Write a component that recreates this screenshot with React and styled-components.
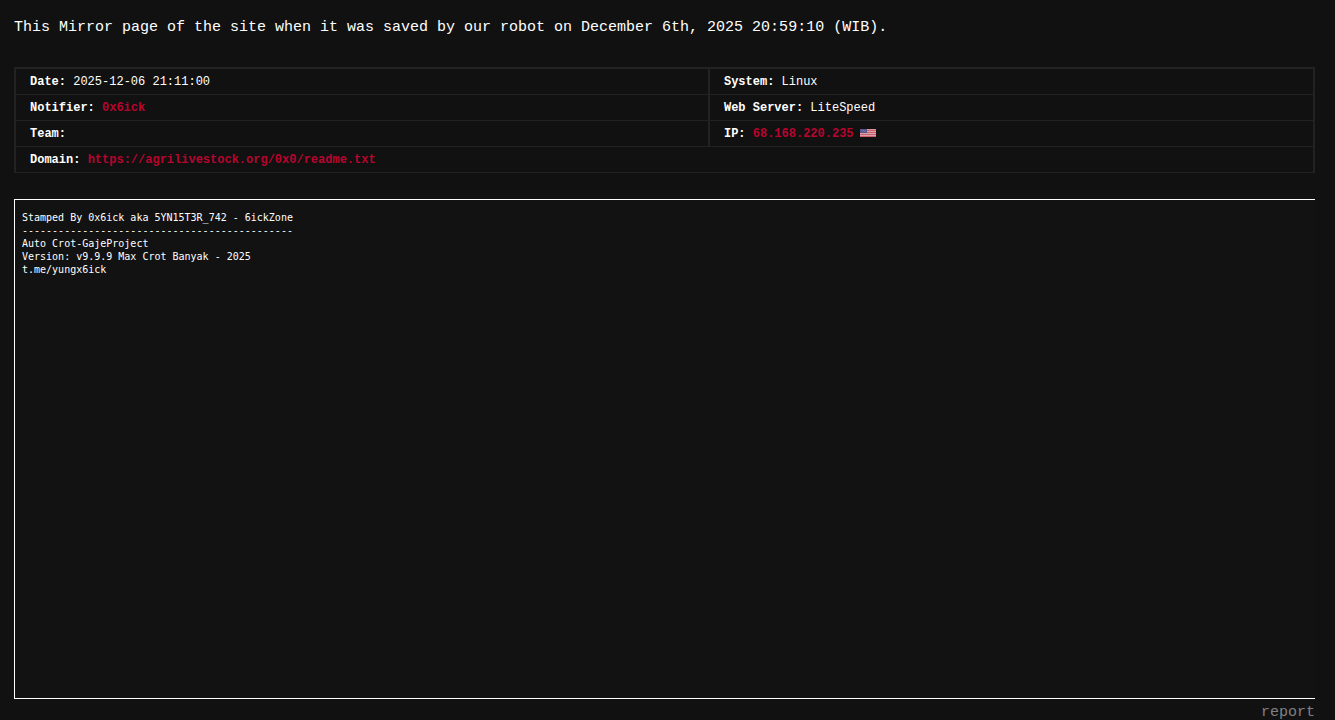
import styled, { createGlobalStyle } from "styled-components";

const GlobalStyle = createGlobalStyle`
	body {
		margin: 0;
		background-color: #111111;
		color: #ffffff;
		font-family: "Liberation Mono", "DejaVu Sans Mono", monospace;
		font-size: 15px;
	}
`

const Page = styled.main`
	padding: 18px 20px 0 14px;
`

const Intro = styled.p`
	margin: 0 0 29px;
	line-height: 20px;
`

const InfoTable = styled.table`
	width: 100%;
	border-collapse: separate;
	border-spacing: 0;
	table-layout: fixed;
	border: 2px solid #222222;
	border-bottom: none;
	font-size: 12px;
	line-height: 23px;
`

const LeftColumn = styled.col`
	width: 53.35%;
`

const InfoCell = styled.td`
	padding: 2px 14px 0;
	border-bottom: 1px solid #222222;
	border-left: ${props => props.$divided ? "2px solid #222222" : "none"};
	white-space: nowrap;
`

const InfoLink = styled.a`
	color: #b8042f;
	font-weight: bold;
	text-decoration: none;
`

const FlagIcon = styled.svg`
	width: 16px;
	height: 8px;
	margin-left: 6px;
`

const MirrorFrame = styled.section`
	box-sizing: border-box;
	height: calc(100vh - 220px);
	min-height: 100px;
	margin-top: 26px;
	padding: 11px 7px;
	background-color: #121212;
	border: 1px solid #ffffff;
	border-right: none;
`

const MirrorText = styled.pre`
	margin: 0;
	font-family: "DejaVu Sans Mono", "Liberation Mono", monospace;
	font-size: 10px;
	line-height: 13px;
`

const Footer = styled.footer`
	display: flex;
	justify-content: flex-end;
	height: 21px;
	padding-top: 5px;
	box-sizing: border-box;
	overflow: hidden;
	line-height: 18px;
`

const ReportLink = styled.a`
	color: #808080;
	text-decoration: none;
`

const mirrorText = `Stamped By 0x6ick aka 5YN15T3R_742 - 6ickZone
---------------------------------------------
Auto Crot-GajeProject
Version: v9.9.9 Max Crot Banyak - 2025
t.me/yungx6ick`

function UsaFlag() {
	return <FlagIcon viewBox="0 0 16 8" role="img" aria-label="United States" shapeRendering="crispEdges">
		<rect width="16" height="8" fill="#dc9098"></rect>
		<path d="M0 1h16v1H0zM0 3h16v1H0zM0 5h16v1H0zM0 7h16v1H0z" fill="#c9616f"></path>
		<path d="M6 2h10v1H6zM0 4h16v1H0zM0 6h16v1H0z" fill="#dda0a8"></path>
		<rect width="7" height="4" fill="#56568c"></rect>
		<path d="M1 1h1v1H1zM3 1h1v1H3zM5 1h1v1H5zM2 2h1v1H2zM4 2h1v1H4z" fill="#77779f"></path>
	</FlagIcon>
}

export default function App() {
	return <Page>
		<GlobalStyle />
		<Intro>This Mirror page of the site when it was saved by our robot on December 6th, 2025 20:59:10 (WIB).</Intro>
		<InfoTable>
			<colgroup>
				<LeftColumn />
				<col />
			</colgroup>
			<tbody>
				<tr>
					<InfoCell><b>Date:</b> 2025-12-06 21:11:00</InfoCell>
					<InfoCell $divided><b>System:</b> Linux</InfoCell>
				</tr>
				<tr>
					<InfoCell><b>Notifier:</b> <InfoLink href="#notifier">0x6ick</InfoLink></InfoCell>
					<InfoCell $divided><b>Web Server:</b> LiteSpeed</InfoCell>
				</tr>
				<tr>
					<InfoCell><b>Team:</b></InfoCell>
					<InfoCell $divided><b>IP:</b> <InfoLink href="#ip">68.168.220.235</InfoLink><UsaFlag /></InfoCell>
				</tr>
				<tr>
					<InfoCell colSpan={2}><b>Domain:</b> <InfoLink href="https://agrilivestock.org/0x0/readme.txt">https://agrilivestock.org/0x0/readme.txt</InfoLink></InfoCell>
				</tr>
			</tbody>
		</InfoTable>
		<MirrorFrame>
			<MirrorText>{mirrorText}</MirrorText>
		</MirrorFrame>
		<Footer>
			<ReportLink href="#report">report</ReportLink>
		</Footer>
	</Page>
}
